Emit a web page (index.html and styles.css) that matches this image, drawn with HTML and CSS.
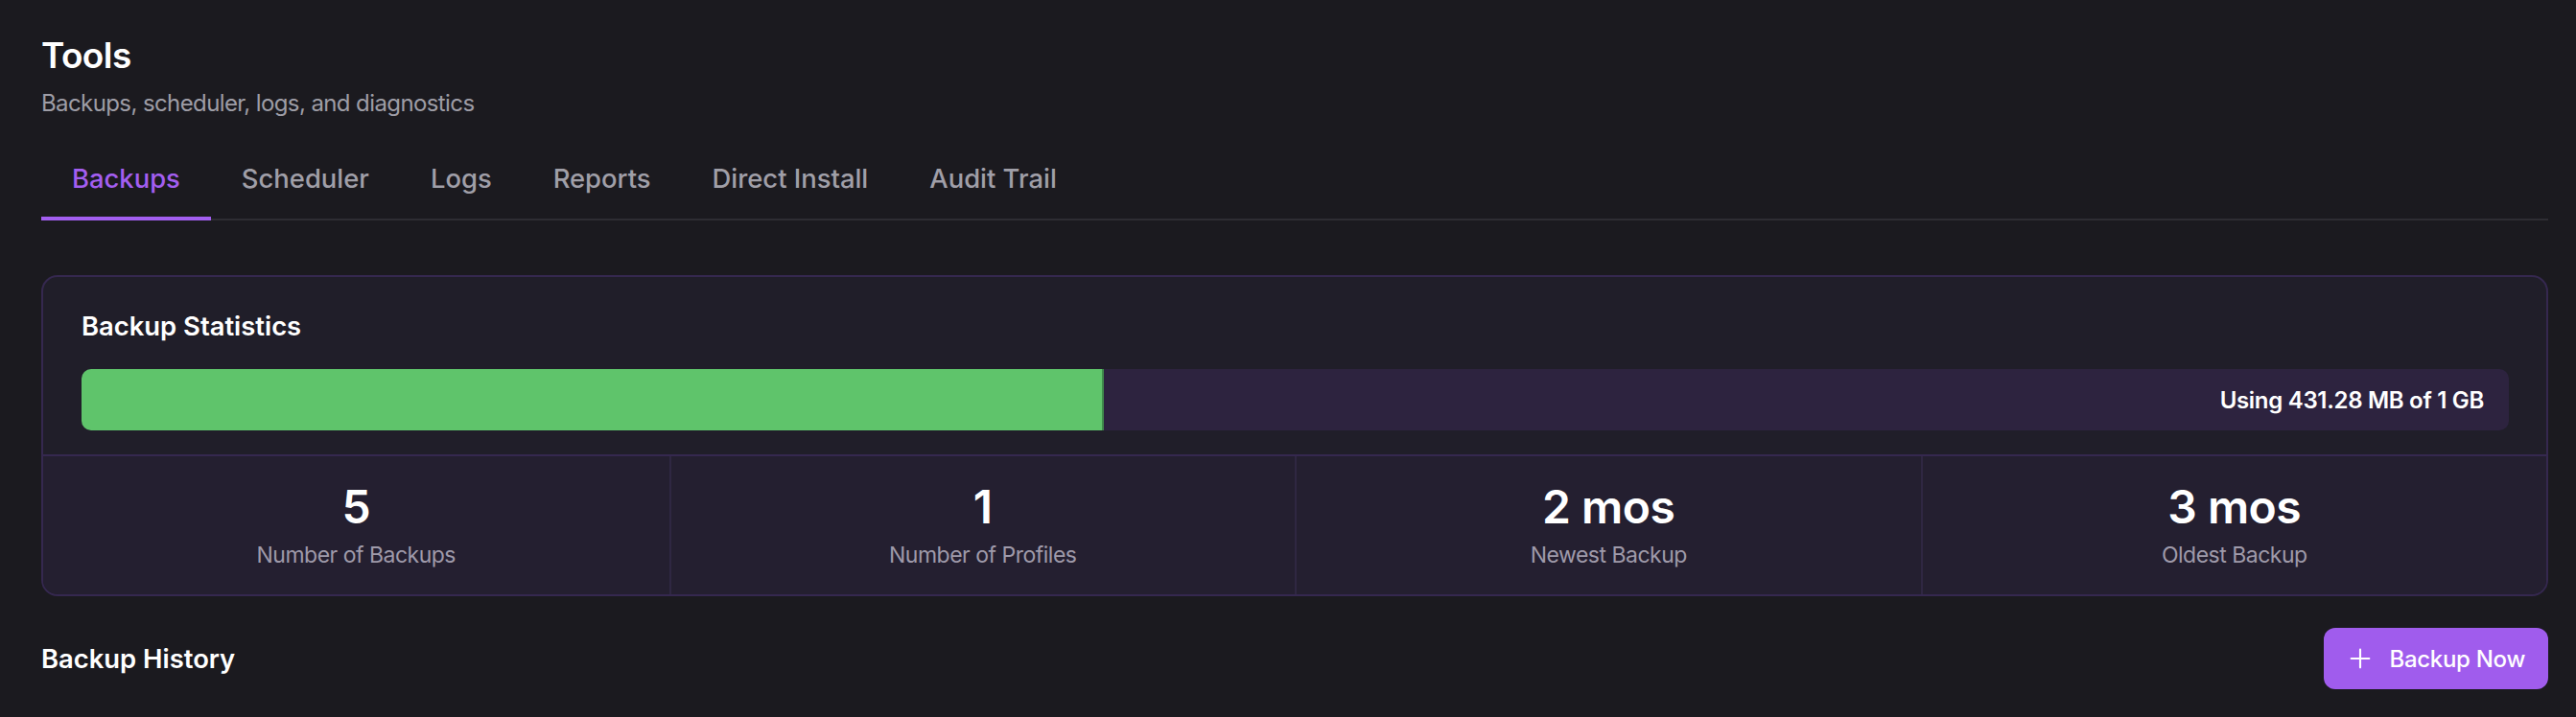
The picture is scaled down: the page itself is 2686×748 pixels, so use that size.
FILE: index.html
```html
<!DOCTYPE html>
<html lang="en">
  <head>
    <meta charset="UTF-8" />
    <meta name="viewport" content="width=device-width, initial-scale=1.0" />
    <title>Tools</title>
    <link rel="stylesheet" href="styles.css">
  </head>
  <body>
    <div class="page">
      <header class="page-header">
        <h1 class="page-title">Tools</h1>
        <p class="page-subtitle">Backups, scheduler, logs, and diagnostics</p>
      </header>

      <nav class="tabs">
        <a class="tab active">Backups</a>
        <a class="tab">Scheduler</a>
        <a class="tab">Logs</a>
        <a class="tab">Reports</a>
        <a class="tab">Direct Install</a>
        <a class="tab">Audit Trail</a>
      </nav>

      <section class="card">
        <div class="card-body">
          <h2 class="card-title">Backup Statistics</h2>
          <div class="usage-bar">
            <div class="usage-fill" style="width: 42.12%"></div>
            <span class="usage-text">Using 431.28 MB of 1 GB</span>
          </div>
        </div>
        <div class="stats">
          <div class="stat">
            <div class="stat-value">5</div>
            <div class="stat-label">Number of Backups</div>
          </div>
          <div class="stat">
            <div class="stat-value">1</div>
            <div class="stat-label">Number of Profiles</div>
          </div>
          <div class="stat">
            <div class="stat-value">2 mos</div>
            <div class="stat-label">Newest Backup</div>
          </div>
          <div class="stat">
            <div class="stat-value">3 mos</div>
            <div class="stat-label">Oldest Backup</div>
          </div>
        </div>
      </section>

      <div class="history-header">
        <h2 class="section-title">Backup History</h2>
        <button class="btn-primary">
          <svg class="btn-icon" viewBox="0 0 24 24" fill="none" stroke="currentColor" stroke-width="1.6" stroke-linecap="round">
            <path d="M5 12h14" />
            <path d="M12 5v14" />
          </svg>
          Backup Now
        </button>
      </div>
    </div>
  </body>
</html>
```

FILE: styles.css
```css
* {
  box-sizing: border-box;
}

html,
body {
  margin: 0;
  background-color: #1b1a1f;
}

body {
  font-family: Inter, "Noto Sans", sans-serif;
  color: #ffffff;
}

.page {
  padding: 35px 29px 0 43px;
}

.page-title {
  margin: 0;
  font-size: 37px;
  line-height: 45px;
  font-weight: 600;
  letter-spacing: -0.6px;
}

.page-subtitle {
  margin: 13px 0 0;
  font-size: 24px;
  line-height: 29px;
  letter-spacing: -0.6px;
  color: #9e9da6;
}

.tabs {
  display: flex;
  margin-top: 28px;
  border-bottom: 2px solid #2e2d33;
}

.tab {
  padding: 20px 32px 23px;
  margin-bottom: -2px;
  border-bottom: 4px solid transparent;
  font-size: 27.4px;
  line-height: 33px;
  font-weight: 500;
  color: #a09fa8;
  cursor: pointer;
}

.tab.active {
  color: #a35ef0;
  border-bottom-color: #a35ef0;
}

.card {
  margin-top: 57px;
  border: 2px solid #35284f;
  border-radius: 17px;
  background-color: #201e29;
  overflow: hidden;
}

.card-body {
  padding: 35px 39px 25px 40px;
}

.card-title {
  margin: 0;
  font-size: 27.4px;
  line-height: 33px;
  font-weight: 600;
}

.usage-bar {
  position: relative;
  display: flex;
  align-items: center;
  justify-content: flex-end;
  height: 64px;
  margin-top: 28px;
  border-radius: 10px;
  background-color: #2d233f;
  overflow: hidden;
}

.usage-fill {
  position: absolute;
  left: 0;
  top: 0;
  bottom: 0;
  background-color: #5fc46b;
  border-right: 2px solid #3f8a4b;
}

.usage-text {
  position: relative;
  padding-right: 26px;
  font-size: 24px;
  font-weight: 600;
  letter-spacing: -0.3px;
}

.stats {
  display: grid;
  grid-template-columns: repeat(4, 1fr);
  border-top: 2px solid #35284f;
  background-color: #241f30;
}

.stat {
  padding: 24px 0 26px;
  text-align: center;
  border-left: 2px solid #2f2742;
}

.stat:first-child {
  border-left: none;
}

.stat-value {
  font-size: 48px;
  line-height: 58px;
  font-weight: 600;
  letter-spacing: -0.5px;
}

.stat-label {
  margin-top: 7px;
  font-size: 23px;
  line-height: 29px;
  letter-spacing: -0.5px;
  color: #9f9aaa;
}

.history-header {
  display: flex;
  align-items: center;
  justify-content: space-between;
  margin-top: 33px;
}

.section-title {
  margin: 0;
  font-size: 27.4px;
  font-weight: 600;
}

.btn-primary {
  display: flex;
  align-items: center;
  gap: 15px;
  height: 64px;
  padding: 0 24px 0 22px;
  border: none;
  border-radius: 12px;
  background-color: #a05ced;
  color: #ffffff;
  font-family: inherit;
  font-size: 24px;
  font-weight: 500;
  letter-spacing: -0.3px;
  cursor: pointer;
}

.btn-icon {
  width: 32px;
  height: 32px;
}
```
